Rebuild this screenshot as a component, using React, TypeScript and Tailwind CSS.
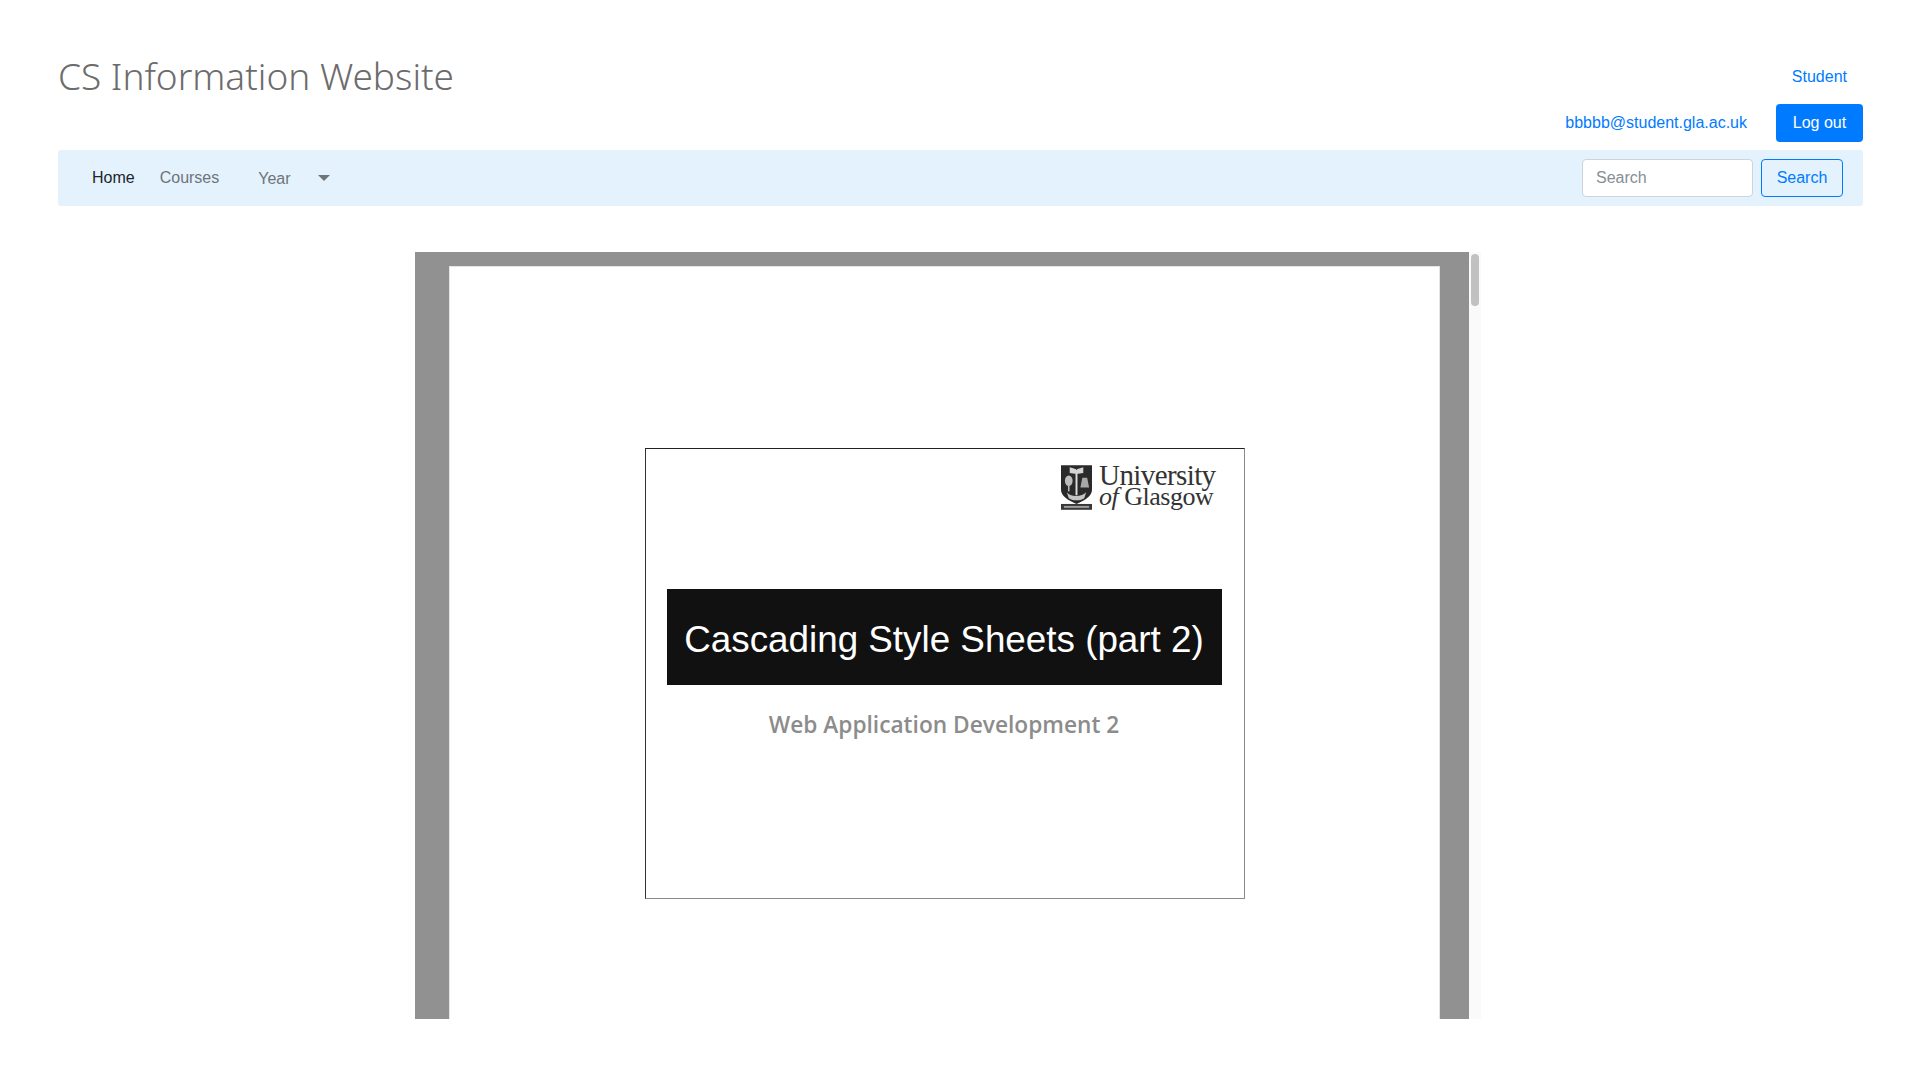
import React from "react";

function Crest() {
  return (
    <svg width="31" height="47" viewBox="0 0 32 48" className="shrink-0">
      <path d="M0 1h32v25c0 7-7 11-16 15C7 37 0 33 0 26z" fill="#2a2a2a" />
      <path d="M9 3l6 2 1 1 1-1 6-2v6l-7 1-7-1z" fill="#d4d4d4" />
      <rect x="15" y="10" width="2" height="22" fill="#dddddd" />
      <ellipse cx="8" cy="17" rx="4" ry="5.500" fill="#bdbdbd" />
      <rect x="7.200" y="22" width="1.600" height="6" fill="#bdbdbd" />
      <path d="M22 14h5l2 10h-9z" fill="#a8a8a8" />
      <path d="M6 29c3 5 16 5 20 0l-2 6c-5 3-11 3-16 0z" fill="#c4c4c4" />
      <rect x="0" y="41" width="32" height="6" fill="#383838" />
      <rect x="3" y="43" width="26" height="2" fill="#a0a0a0" />
    </svg>
  );
}

function Slide() {
  return (
    <div className="mx-auto h-[451px] w-[600px] border border-[#8a8a8a] border-t-[#222] border-l-[#333] bg-white px-[21px] font-['Liberation_Sans',sans-serif]">
      <div className="flex h-[140px] items-start justify-end pt-[15px] pr-[7px]">
        <div className="flex gap-[7px]">
          <Crest />
          <div className="font-['Liberation_Serif',serif] leading-[22px] text-[#333]">
            <div className="text-[29px] tracking-[-0.6px]">University</div>
            <div className="text-[26px] tracking-[-0.5px]">
              <span className="italic">of</span> Glasgow
            </div>
          </div>
        </div>
      </div>
      <div className="flex h-[96px] w-[555px] items-center justify-center bg-[#111111] pt-[5px] text-[36.800px] text-white">
        Cascading Style Sheets (part 2)
      </div>
      <div className="mt-[23px] w-[555px] text-center font-['Open_Sans',sans-serif] text-[22.700px] font-semibold text-[#8c8c8c]">
        Web Application Development 2
      </div>
    </div>
  );
}

export default function App() {
  return (
    <div className="min-h-[1080px] bg-white px-[58px] pr-[57px] font-['Liberation_Sans',sans-serif] text-base">
      <header className="flex items-start justify-between pt-[53px]">
        <h1 className="font-['Noto_Sans',sans-serif] text-[37px] leading-[46px] font-light text-[#6c6c6c]">
          CS Information Website
        </h1>
        <div className="mt-[12px] flex flex-col items-end">
          <a className="mr-[16px] leading-[24px] text-[#007bff]" href="#">Student</a>
          <div className="mt-[-2px] flex items-center gap-[29px] pt-[17px]">
            <a className="text-[#007bff]" href="#">bbbbb@student.gla.ac.uk</a>
            <button className="h-[38px] w-[87px] rounded bg-[#007bff] text-white">Log out</button>
          </div>
        </div>
      </header>

      <nav className="mt-[8px] flex h-[56px] items-center justify-between rounded-[3px] bg-[#e3f2fd] pr-[20px] pl-[34px]">
        <div className="flex items-center">
          <a className="text-[#212529]" href="#">Home</a>
          <a className="ml-[25px] text-[#6f7479]" href="#">Courses</a>
          <a className="ml-[39px] mt-[1px] text-[#6f7479]" href="#">Year</a>
          <span className="ml-[27px] h-0 w-0 border-x-[6px] border-t-[6px] border-x-transparent border-t-[#6f7479]" />
        </div>
        <div className="flex items-center gap-[8px]">
          <input
            className="h-[38px] w-[171px] rounded border border-[#ced4da] bg-white px-[13px] text-base placeholder:text-[#868e96]"
            placeholder="Search"
          />
          <button className="h-[38px] w-[82px] rounded border border-[#007bff] text-[#007bff]">Search</button>
        </div>
      </nav>

      <main className="mt-[46px] ml-[357px] flex h-[767px] w-[1066px] overflow-hidden">
        <div className="h-full w-[1054px] bg-[#919191] pt-[14px] pl-[34px]">
          <div className="h-full w-[991px] border border-b-0 border-[#e4e4e4] bg-white pt-[181px]">
            <Slide />
          </div>
        </div>
        <div className="h-full w-[12px] bg-[#fafafa] px-[2px] pt-[2px]">
          <div className="h-[52px] w-[8px] rounded-full bg-[#c1c1c1]" />
        </div>
      </main>
    </div>
  );
}
